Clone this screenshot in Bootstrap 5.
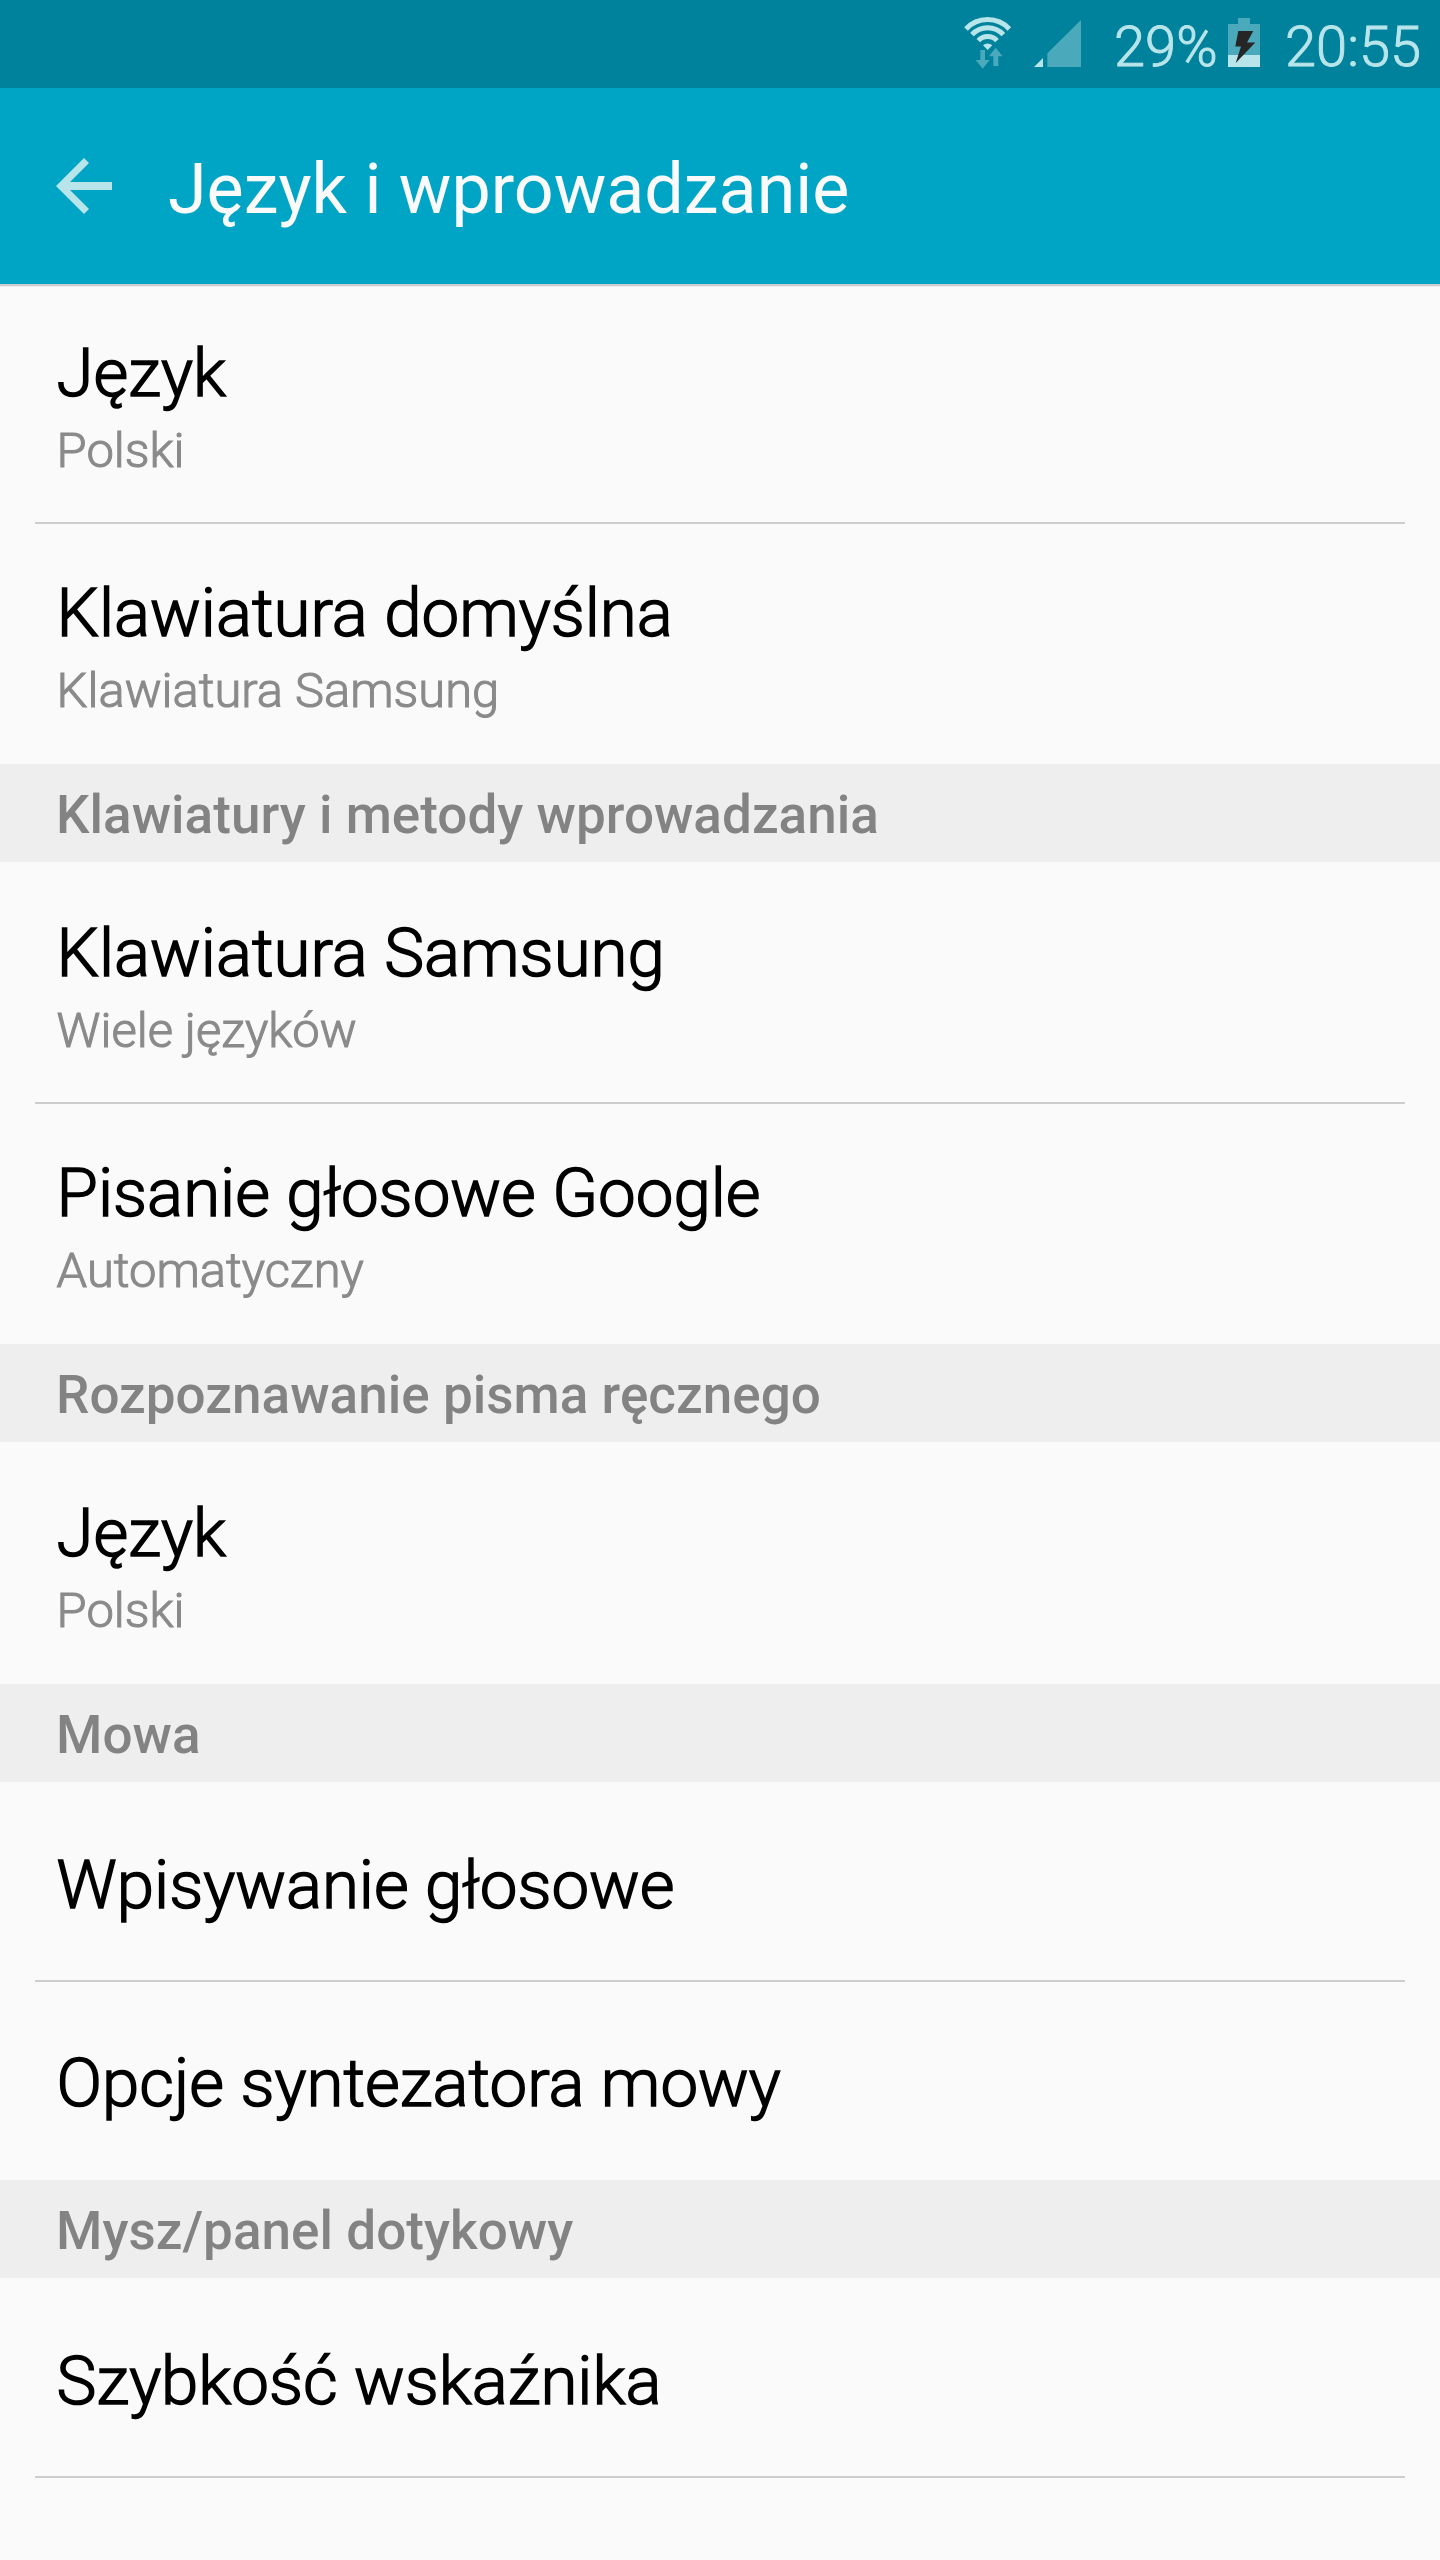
<!DOCTYPE html>
<html lang="pl">
<head>
<meta charset="utf-8">
<meta name="viewport" content="width=device-width, initial-scale=1">
<title>Język i wprowadzanie</title>
<link href="https://cdn.jsdelivr.net/npm/bootstrap@5.3.0/dist/css/bootstrap.min.css" rel="stylesheet">
<style>
body{font-family:Roboto,sans-serif;background:#fafafa;color:#000;height:2560px;overflow:hidden}
svg{display:block;flex:none}
.status-strip{height:88px;background:#00829d;color:#b8e5ea;font-size:56px;font-weight:300;line-height:94px;-webkit-text-stroke:.9px #b8e5ea}
.glyph-lit{fill:#b8e5ea}
.glyph-dim{fill:#4aa9bb}
.wifi-icon{margin:16px 21px 0 0}
.signal-icon{margin:20px 33px 0 0}
.battery-icon{margin:18px 25px 0 0}
.charge{width:114px}
.clock{width:155px}
.app-head{height:196px;margin-bottom:-2px;padding:60px 56px 0;background:#00a5c5;color:#fafafa;box-shadow:0 2px 0 #cbcdd0,0 3px 0 #ececec}
.back-icon{margin:10px 56px 0 0}
.app-title{font-size:70px;font-weight:400;line-height:82px}
.setting{height:242px;margin:0 35px;padding:50px 21.6px 0;border-top:2px solid #cdcdcd}
.setting:first-child{border-top-color:transparent}
.setting:first-child:not(:last-child){height:240px}
.setting.solo{height:200px;padding-top:62px}
.setting.solo:first-child{height:198px}
.setting-name{font-size:67.2px;line-height:78px;font-weight:300;-webkit-text-stroke:1.5px #000}
.setting-value{font-size:48.9px;line-height:58px;font-weight:300;color:#8a8a8a;-webkit-text-stroke:1.1px #8a8a8a;margin-top:10px}
.spacer{height:80px;margin:0 35px;border-top:2px solid #cdcdcd}
.section-name{height:98px;background:#eee;color:#838383;font-size:53px;font-weight:500;line-height:102px;padding:0 56px;margin:0;letter-spacing:.04px}
</style>
</head>
<body>
<header class="position-relative">
  <div class="status-strip d-flex justify-content-end align-items-start">
    <svg class="wifi-icon" width="50" height="53" viewBox="0 0 150 159" aria-hidden="true">
      <g fill="none" stroke="#b8e5ea" stroke-width="15">
        <path d="M9 39A89 89 0 0 1 139 39"/><path d="M27 56A64 64 0 0 1 121 56"/><path d="M46 74A38 38 0 0 1 102 74"/>
      </g>
      <path class="glyph-lit" d="M74 102L60 88A20 20 0 0 1 88 88Z"/>
      <path class="glyph-dim" d="M52 102H66V132H80L59 158L38 132H52ZM98 95L119 121H106V150H91V121H78Z"/>
    </svg>
    <svg class="signal-icon" width="47" height="47" viewBox="0 0 141 141" aria-hidden="true">
      <path class="glyph-lit" d="M0 141L27 114V141Z"/><path class="glyph-dim" d="M40 141V100L141 0V141Z"/>
    </svg>
    <span class="charge">29%</span>
    <svg class="battery-icon" width="32" height="49" viewBox="0 0 32 49" aria-hidden="true">
      <path class="glyph-dim" d="M10 0H22V6H32V37H0V6H10Z"/><path class="glyph-lit" d="M0 37H32V49H0Z"/>
      <path fill="#262626" d="M10.3 13H25.3L19 24.5H27.3L7.7 45L13 28.5H7.3Z"/>
    </svg>
    <span class="clock">20:55</span>
  </div>
  <div class="app-head d-flex align-items-start">
    <svg class="back-icon" width="56" height="56" viewBox="0 0 56 56" aria-label="Wstecz"><path class="glyph-lit" d="M0 28L28 0L33 5L14 24H56V32H14L33 51L28 56Z"/></svg>
    <h1 class="app-title m-0">Język i wprowadzanie</h1>
  </div>
</header>
<main>
  <section>
    <div class="setting"><div class="setting-name">Język</div><div class="setting-value">Polski</div></div>
    <div class="setting"><div class="setting-name">Klawiatura domyślna</div><div class="setting-value">Klawiatura Samsung</div></div>
  </section>
  <h2 class="section-name">Klawiatury i metody wprowadzania</h2>
  <section>
    <div class="setting"><div class="setting-name">Klawiatura Samsung</div><div class="setting-value">Wiele języków</div></div>
    <div class="setting"><div class="setting-name">Pisanie głosowe Google</div><div class="setting-value">Automatyczny</div></div>
  </section>
  <h2 class="section-name">Rozpoznawanie pisma ręcznego</h2>
  <section>
    <div class="setting"><div class="setting-name">Język</div><div class="setting-value">Polski</div></div>
  </section>
  <h2 class="section-name">Mowa</h2>
  <section>
    <div class="setting solo"><div class="setting-name">Wpisywanie głosowe</div></div>
    <div class="setting solo"><div class="setting-name">Opcje syntezatora mowy</div></div>
  </section>
  <h2 class="section-name">Mysz/panel dotykowy</h2>
  <section>
    <div class="setting solo"><div class="setting-name">Szybkość wskaźnika</div></div>
    <div class="spacer"></div>
  </section>
</main>
<script src="https://cdn.jsdelivr.net/npm/bootstrap@5.3.0/dist/js/bootstrap.bundle.min.js"></script>
</body>
</html>
